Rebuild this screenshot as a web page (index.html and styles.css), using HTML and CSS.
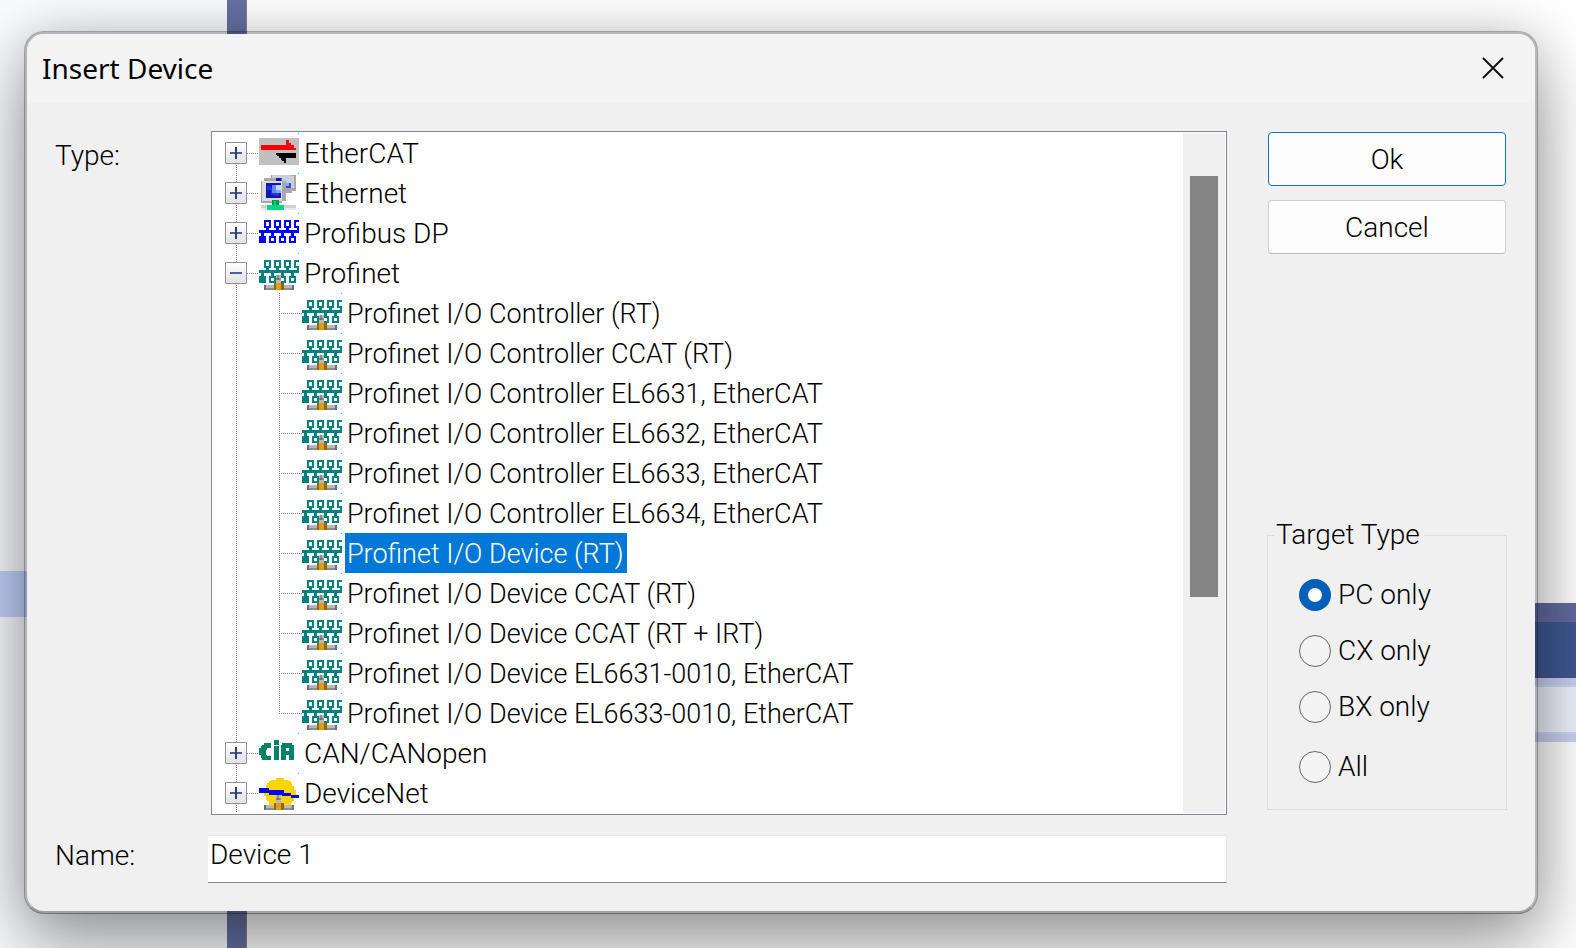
FILE: index.html
```html
<!DOCTYPE html>
<html lang="en">
<head>
<meta charset="utf-8">
<title>Insert Device</title>
<link rel="stylesheet" href="styles.css">
</head>
<body>
<svg class="symbols" aria-hidden="true">
  <symbol id="bus" viewBox="0 0 40 40">
    <path fill-rule="evenodd" d="M5 7h7v8H5zM7 9v4h3V9zM15 7h7v8h-7zM17 9v4h3V9zM25 7h7v8h-7zM27 9v4h3V9z"/>
    <path d="M35 7h5v2h-3v4h3v7H0v-3h7v-2h3v2h7v-2h3v2h7v-2h3v2h8v-2h-3z"/>
    <path d="M2 20h3v3h2v7H0v-7h2zM12 20h3v3h-3zM22 20h3v3h-3zM32 20h3v3h-3z"/>
    <path fill-rule="evenodd" d="M10 23h7v7h-7zM12 25v3h3v-3zM20 23h7v7h-7zM22 25v3h3v-3zM30 23h7v7h-7zM32 25v3h3v-3z"/>
  </symbol>
  <symbol id="plug" viewBox="0 0 24 24">
    <path fill="#b8b8c2" d="M4 19h5v3H4zM15 19h5v3h-5zM10 13h3v5h-3z"/>
    <path fill="#8c8c8c" d="M4 21h5v1H4zM15 21h5v1h-5zM11 13h1v2h-1zM10 15h3v1h-3z"/>
    <path fill="#6e6e6e" d="M3 19h1v3H3zM20 19h1v3h-1zM11 15h1v1h-1z"/>
    <path fill="#9a6408" d="M9 18h6v4H9z"/>
    <path fill="#dca018" d="M10 18h3v3h-3zM10 21h3v1h-3z"/>
  </symbol>
  <symbol id="ethercat" viewBox="0 0 24 24">
    <path fill="#c0c0c0" d="M0 3h24v16H0z"/>
    <path fill="#f00" d="M1 7h15V4h2v2h1v1h2v2h1v1H1z"/>
    <path fill="#000" d="M10 12h12v3h-6v3h-1v-1h-1v-1h-1v-1h-1v-1h-1v-1h-1z"/>
  </symbol>
  <symbol id="ethernet" viewBox="0 0 24 24">
    <path fill="#a8a8a8" d="M7 1h15v10h-2v1h-5v-2H7z"/>
    <path fill="#d0d0d4" d="M8 1h11v2H8zM19 2h2v7h-2z"/>
    <path fill="#1018b8" d="M10 3h3v3h-3z"/><path fill="#3858e8" d="M13 3h2v5h-2z"/>
    <path fill="#b8d0ff" d="M14 3h5v3h-5z"/><path fill="#3850d0" d="M15 6h4v3h-4z"/><path fill="#88a8f8" d="M16 6h2v2h-2z"/>
    <path fill="#a8a8a8" d="M3 3h7v2h6v12h-2v1H1V5h2z"/>
    <path fill="#dcdce0" d="M2 5h12v12H2z"/>
    <path fill="#1018a8" d="M4 6h9v9H4z"/>
    <path fill="#1838e0" d="M5 8h2v2H5zM7 9h2v4H7zM9 12h3v2H9z"/>
    <path fill="#6888f8" d="M8 7h2v5H8z"/><path fill="#c0d8ff" d="M10 7h3v3h-3z"/>
    <path fill="#88a8ff" d="M10 10h3v2h-3z"/>
    <path fill="#ccd4d4" d="M1 19h21v3H1z"/><path fill="#e4e8e8" d="M1 21h21v1H1z"/>
    <path fill="#009850" d="M8 16h4v3H8z"/><path fill="#00d880" d="M5 19h10v3H5zM9 17h1v3H9z"/>
  </symbol>
  <symbol id="cia" viewBox="0 0 24 24">
    <path d="M3 6h4v3H5v1H4v3h1v1h2v2H2v-1H1v-2H0V9h1V8h1V7h1zM9 4h3v3H9zM9 8h3v8H9zM14 6h6v1h1v9h-3v-3h-2v3h-3V7h1zM16 9v2h2V9z"/>
  </symbol>
  <symbol id="devicenet" viewBox="0 0 24 24">
    <path fill="#ffd400" d="M10 3h5v1h3v1h1v1h1v2h1v2h1v5h-1v2h-1v1h-1v1H6v-2H5v-1H4v-2H3V9h1V7h1V6h1V5h1V4h3z"/>
    <path fill="#00f" d="M0 9h6v1h9v2h4v1h5v2h-5v-1h-5v-1H6v-1H0z"/>
    <use href="#plug"/>
  </symbol>
  <symbol id="profinet" viewBox="0 0 24 24">
    <use href="#bus"/><use href="#plug"/>
  </symbol>
</svg>

<div class="backdrop" aria-hidden="true">
  <div class="pane"><div class="pane-row"></div></div>
  <div class="divider"></div>
  <div class="page"><div class="stripes"></div></div>
</div>

<main class="dialog" role="dialog" aria-labelledby="dialog-title">
  <header class="titlebar">
    <h1 id="dialog-title">Insert Device</h1>
    <button class="close" type="button" aria-label="Close"><svg viewBox="0 0 20 20"><path d="M0 0L20 20M20 0L0 20"/></svg></button>
  </header>
  <form class="content">
    <span class="caption" id="type-label">Type:</span>
    <div class="treebox">
      <ul class="tree" aria-labelledby="type-label">
        <li><div class="row"><button class="toggle plus" type="button" aria-label="Expand EtherCAT"></button><svg class="icon"><use href="#ethercat"/></svg><span class="label">EtherCAT</span></div></li>
        <li><div class="row"><button class="toggle plus" type="button" aria-label="Expand Ethernet"></button><svg class="icon"><use href="#ethernet"/></svg><span class="label">Ethernet</span></div></li>
        <li><div class="row"><button class="toggle plus" type="button" aria-label="Expand Profibus DP"></button><svg class="icon blue"><use href="#bus"/></svg><span class="label">Profibus DP</span></div></li>
        <li><div class="row"><button class="toggle" type="button" aria-label="Collapse Profinet"></button><svg class="icon teal"><use href="#profinet"/></svg><span class="label">Profinet</span></div>
          <ul class="branch">
            <li class="row"><svg class="icon teal"><use href="#profinet"/></svg><span class="label">Profinet I/O Controller (RT)</span></li>
            <li class="row"><svg class="icon teal"><use href="#profinet"/></svg><span class="label">Profinet I/O Controller CCAT (RT)</span></li>
            <li class="row"><svg class="icon teal"><use href="#profinet"/></svg><span class="label">Profinet I/O Controller EL6631, EtherCAT</span></li>
            <li class="row"><svg class="icon teal"><use href="#profinet"/></svg><span class="label">Profinet I/O Controller EL6632, EtherCAT</span></li>
            <li class="row"><svg class="icon teal"><use href="#profinet"/></svg><span class="label">Profinet I/O Controller EL6633, EtherCAT</span></li>
            <li class="row"><svg class="icon teal"><use href="#profinet"/></svg><span class="label">Profinet I/O Controller EL6634, EtherCAT</span></li>
            <li class="row"><svg class="icon teal"><use href="#profinet"/></svg><span class="label selected">Profinet I/O Device (RT)</span></li>
            <li class="row"><svg class="icon teal"><use href="#profinet"/></svg><span class="label">Profinet I/O Device CCAT (RT)</span></li>
            <li class="row"><svg class="icon teal"><use href="#profinet"/></svg><span class="label">Profinet I/O Device CCAT (RT + IRT)</span></li>
            <li class="row"><svg class="icon teal"><use href="#profinet"/></svg><span class="label">Profinet I/O Device EL6631-0010, EtherCAT</span></li>
            <li class="row"><svg class="icon teal"><use href="#profinet"/></svg><span class="label">Profinet I/O Device EL6633-0010, EtherCAT</span></li>
          </ul>
        </li>
        <li><div class="row"><button class="toggle plus" type="button" aria-label="Expand CAN/CANopen"></button><svg class="icon green"><use href="#cia"/></svg><span class="label">CAN/CANopen</span></div></li>
        <li><div class="row"><button class="toggle plus" type="button" aria-label="Expand DeviceNet"></button><svg class="icon"><use href="#devicenet"/></svg><span class="label">DeviceNet</span></div></li>
      </ul>
      <div class="scrollbar"><div class="thumb"></div></div>
    </div>
    <div class="side">
      <button class="action default" type="button">Ok</button>
      <button class="action" type="button">Cancel</button>
      <fieldset class="target">
        <legend>Target Type</legend>
        <label><input type="radio" name="target" checked>PC only</label>
        <label><input type="radio" name="target">CX only</label>
        <label><input type="radio" name="target">BX only</label>
        <label><input type="radio" name="target">All</label>
      </fieldset>
    </div>
    <label class="caption name-caption" for="device-name">Name:</label>
    <input class="name" id="device-name" type="text" value="Device 1">
  </form>
</main>
</body>
</html>
```
FILE: styles.css
```css
* { box-sizing: border-box; }

body {
  margin: 0;
  min-height: 100vh;
  padding: 31px 38px 34px 24px;
  display: flex;
  position: relative;
  overflow: hidden;
  background: #fff;
  color: #000;
  font: 300 28px/32px Roboto, "Liberation Sans", sans-serif;
}

button, input { font: inherit; color: inherit; }
ul { list-style: none; margin: 0; padding: 0; }
.symbols { position: absolute; width: 0; height: 0; }

/* Application behind the dialog */
.backdrop { position: absolute; inset: 0; display: flex; }
.pane { width: 227px; padding-top: 571px; background: #fafbff; }
.pane-row { height: 46px; background: #c2d2fc; }
.divider { width: 20px; background: #6671a4; border-right: 1px solid #8a8580; }
.page { flex: 1; padding-top: 603px; background: #fff; }
.stripes {
  height: 139px;
  background: linear-gradient(#626ca0 0 19px, #405893 19px 75px, #cbd2f0 75px 82px, #c9dafa 82px 84px, #eff3fd 84px 129px, #c9dafa 129px 131px, #cbd2f0 131px);
}

/* Dialog */
.dialog {
  position: relative;
  flex: 1;
  display: flex;
  flex-direction: column;
  border: 3px solid rgba(0, 0, 0, .28);
  border-bottom-color: rgba(0, 0, 0, .36);
  border-radius: 20px;
  background: #f0f0f0 padding-box;
  box-shadow: 0 36px 76px rgba(0, 0, 0, .34), 0 2px 50px rgba(0, 0, 0, .18);
}
.titlebar {
  display: flex;
  align-items: center;
  justify-content: space-between;
  height: 69px;
  padding: 0 32px 2px 15px;
  border-radius: 17px 17px 0 0;
  background: #f3f3f3;
}
.titlebar h1 { margin: 0; font: 400 28px/32px "Noto Sans", sans-serif; }
.close { display: flex; padding: 0; border: 0; background: none; }
.close svg { width: 20px; height: 20px; overflow: visible; stroke: #111; stroke-width: 2; }

.content {
  display: grid;
  grid-template-columns: 153px 1fr 280px;
  row-gap: 20px;
  padding: 28px 28px 28px;
}
.caption { padding-top: 9px; }
.name-caption { padding-top: 5px; }

/* Tree */
.treebox {
  display: flex;
  margin-left: 3px;
  padding: 1px;
  border: 1px solid #828790;
  background: #fff;
}
.tree {
  flex: 1;
  background: repeating-linear-gradient(#808080 0 1px, #fff 1px 2px) 23px 20px / 1px 100% no-repeat;
}
.branch {
  font-size: 27px;
  background: repeating-linear-gradient(#808080 0 1px, #fff 1px 2px) 66px 0 / 1px calc(100% - 20px) no-repeat;
}
.row {
  display: flex;
  align-items: center;
  height: 40px;
  padding-left: 12px;
  background: repeating-linear-gradient(90deg, #808080 0 1px, #fff 1px 2px) 34px 20px / 12px 1px no-repeat;
}
.branch .row {
  padding-left: 89px;
  background-position: 66px 20px;
  background-size: 23px 1px;
}
.toggle {
  width: 22px;
  height: 22px;
  margin-right: 12px;
  padding: 0;
  border: 1px solid #8f8f8f;
  border-radius: 1px;
  background:
    linear-gradient(#4560a8, #4560a8) center / 12px 2px no-repeat,
    linear-gradient(#fff, #e2e2e2);
}
.toggle.plus {
  background:
    linear-gradient(#2b3f78, #2b3f78) center / 2px 12px no-repeat,
    linear-gradient(#4560a8, #4560a8) center / 12px 2px no-repeat,
    linear-gradient(#fff, #e2e2e2);
}
.icon {
  width: 40px;
  height: 40px;
  margin-right: 3px;
  shape-rendering: crispEdges;
  background: linear-gradient(#0ff, #0ff) right top / 1px 1px no-repeat;
}
.blue { fill: #00f; }
.teal { fill: #008080; }
.green { fill: #008264; }
.label { height: 40px; padding: 0 3px 0 2px; line-height: 42px; white-space: nowrap; }
.selected { background: #0078d7; color: #fff; }

.scrollbar { width: 42px; padding: 43px 7px 0; background: #f0f0f0; }
.thumb { height: 421px; background: #858585; }

/* Buttons and options */
.side { display: flex; flex-direction: column; padding: 1px 1px 0 41px; }
.action {
  height: 54px;
  margin-bottom: 14px;
  padding: 2px 0 0;
  border: 1px solid #d0d0d0;
  border-bottom-color: #bababa;
  border-radius: 4px;
  background: #fdfdfd;
}
.action.default { border-color: #0078d4; }
.target {
  display: flex;
  flex-direction: column;
  gap: 24px;
  margin: auto -1px 5px;
  padding: 28px 31px 26px;
  border: 1px solid #dcdcdc;
}
.target legend { margin-left: -25px; padding: 0 4px 0 2px; }
.target label { display: flex; align-items: center; gap: 7px; }
.target label:last-child { margin-top: 4px; }
.target input {
  appearance: none;
  width: 32px;
  height: 32px;
  margin: 0;
  border: 1px solid #666;
  border-radius: 50%;
  background: #f4f4f4;
}
.target input:checked { border: 9px solid #005fb8; background: #fff; }

.name {
  width: 100%;
  height: 48px;
  padding: 0 2px 10px;
  border: solid #e8e8e8;
  border-width: 1px 1px 1px 0;
  border-bottom-color: #868686;
  background: #fff;
}
```
